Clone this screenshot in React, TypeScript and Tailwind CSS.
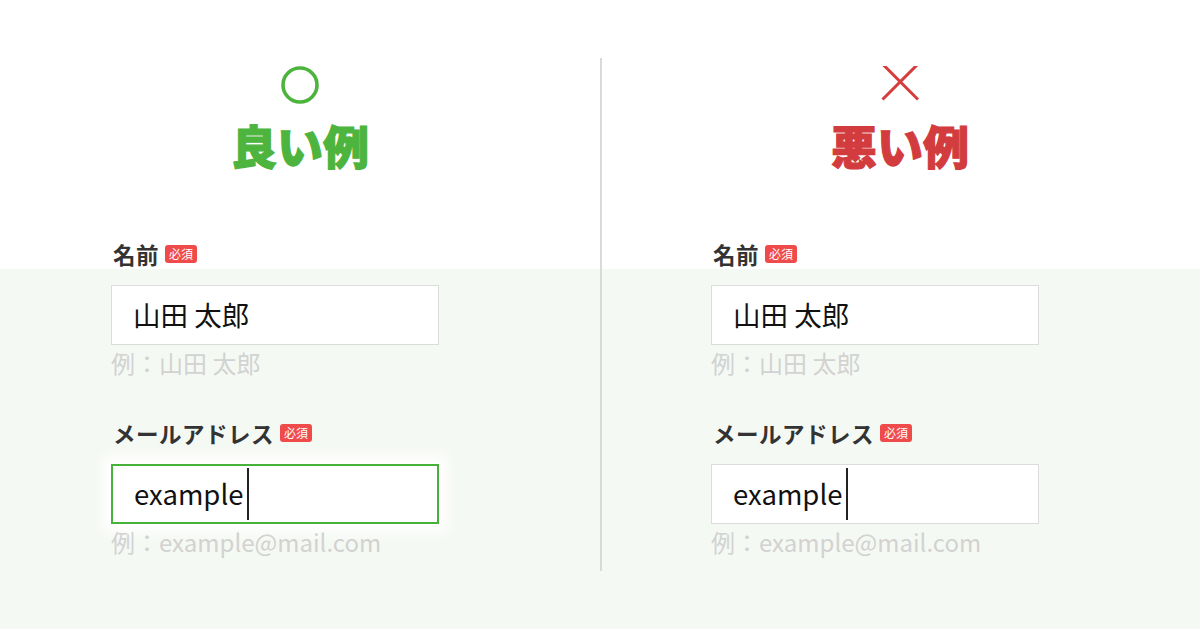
import React from "react";

const jp = { fontFamily: '"Noto Sans CJK JP", "Noto Sans", sans-serif' };

const Badge = () => (
  <span className="ml-[6px] inline-flex h-[18px] w-[32px] items-center justify-center rounded-[3px] bg-[#f04b4b] text-[12px] leading-none text-white">
    必須
  </span>
);

const Field = ({
  label,
  value,
  hint,
  focused,
  caret,
}: {
  label: string;
  value: string;
  hint: string;
  focused?: boolean;
  caret?: boolean;
}) => (
  <div>
    <div className="flex h-[22px] items-center pl-[2px]">
      <span className="text-[22.5px] font-bold leading-none tracking-[0.5px] text-[#333]">{label}</span>
      <Badge />
    </div>
    <div
      className={
        focused
          ? "mt-[20px] flex h-[60px] w-[328px] items-center border-2 border-[#47b23a] bg-white pl-[21px] shadow-[0_0_12px_8px_#fff]"
          : "mt-[20px] flex h-[60px] w-[328px] items-center border border-[#dcdcdc] bg-white pl-[21px]"
      }
    >
      <span className="text-[27.5px] leading-none text-[#111]">{value}</span>
      {caret && <span className="ml-[4px] h-[52px] w-[1.5px] bg-[#222]" />}
    </div>
    <div className="mt-[3px] text-[24px] leading-[30px] text-[#d2d2d2]">{hint}</div>
  </div>
);

const Column = ({ good }: { good: boolean }) => (
  <div className={good ? "w-[600px] pl-[111px]" : "flex-1 pl-[109px]"}>
    <div className="-ml-[111px] flex w-[600px] flex-col items-center">
      <div className="mt-[66px] flex h-[38px] items-center justify-center">
        {good ? (
          <svg width="38" height="38" viewBox="0 0 38 38">
            <circle cx="19" cy="19" r="17" fill="none" stroke="#4cb43d" strokeWidth="3.6" />
          </svg>
        ) : (
          <svg width="38" height="38" viewBox="0 0 38 38">
            <path d="M1.5 -2 L37 33.5 M37 -2 L1.5 33.5" stroke="#d73c3c" strokeWidth="3" fill="none" />
          </svg>
        )}
      </div>
      <h2
        className={
          good
            ? "mt-[12px] text-[46px] font-black leading-[56px] text-[#4db43e] [-webkit-text-stroke:1.2px_#4db43e]"
            : "mt-[12px] text-[46px] font-black leading-[56px] text-[#d33c3f] [-webkit-text-stroke:1.2px_#d33c3f]"
        }
      >
        {good ? "良い例" : "悪い例"}
      </h2>
    </div>
    <div className="mt-[71px]">
      <Field label="名前" value="山田 太郎" hint="例：山田 太郎" />
    </div>
    <div className="mt-[44px]">
      <Field label="メールアドレス" value="example" hint="例：example@mail.com" focused={good} caret />
    </div>
  </div>
);

export default function App() {
  return (
    <div
      className="flex h-[629px] w-[1200px] overflow-hidden bg-[linear-gradient(to_bottom,#ffffff_269px,#f5f9f3_269px)]"
      style={jp}
    >
      <Column good />
      <div className="mb-[58px] mt-[58px] w-[2px] shrink-0 bg-[#d9d9d9]" />
      <Column good={false} />
    </div>
  );
}
